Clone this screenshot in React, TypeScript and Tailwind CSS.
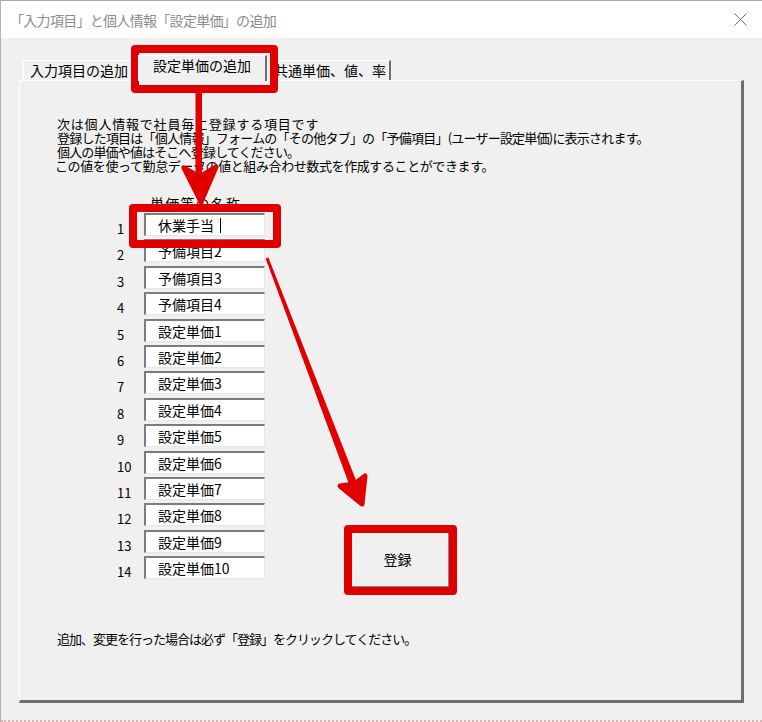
import React from "react";

const rows = [
  "休業手当",
  "予備項目2",
  "予備項目3",
  "予備項目4",
  "設定単価1",
  "設定単価2",
  "設定単価3",
  "設定単価4",
  "設定単価5",
  "設定単価6",
  "設定単価7",
  "設定単価8",
  "設定単価9",
  "設定単価10",
];

export default function App() {
  return (
    <div className="relative flex h-[722px] w-[762px] flex-col overflow-hidden border-l border-[#b4b4b4] bg-[#f0f0f0] font-['Noto_Sans_CJK_JP','Noto_Sans_JP',sans-serif] text-black">
      {/* title bar */}
      <div className="flex h-[38px] shrink-0 items-center justify-between border-t border-[#a8a8a8] bg-white pl-[9px] pr-[15px]">
        <span className="text-[14px] leading-none tracking-[-0.7px] text-[#8c8c8c]">
          「入力項目」と個人情報「設定単価」の追加
        </span>
        <svg width="13" height="13" viewBox="0 0 13 13">
          <path d="M0.5 0.5 L12.5 12.5 M12.5 0.5 L0.5 12.5" stroke="#6a6a6a" strokeWidth="1" fill="none" />
        </svg>
      </div>

      {/* body */}
      <div className="flex flex-col pl-[18px] pt-[18px]">
        {/* tabs */}
        <div className="flex h-[25px] items-end pl-[4px]">
          <div className="flex h-[21px] w-[117px] items-center overflow-hidden whitespace-nowrap border-l border-t border-white pb-[3px] pl-[6px] text-[14px] leading-none">
            入力項目の追加
          </div>
          <div className="relative z-10 -ml-[2px] flex h-[26px] w-[129px] items-center justify-center border-l border-t border-white border-r-2 border-r-[#6e6e6e] bg-[#f0f0f0] pb-[8px] text-[14px] leading-none">
            設定単価の追加
          </div>
          <div className="flex h-[21px] w-[124px] items-center whitespace-nowrap border-t border-white border-r-2 border-r-[#6e6e6e] pb-[3px] pl-[7px] text-[14px] leading-none">
            共通単価、値、率
          </div>
        </div>

        {/* panel */}
        <div className="-mt-[1px] h-[623px] w-[725px] border-l border-t border-white border-b-[3px] border-r-[3px] border-b-[#6e6e6e] border-r-[#6e6e6e]">
          <div className="ml-[37px] mt-[36px] flex flex-col text-[13px] leading-[14px]">
            <span className="tracking-[0.8px]">次は個人情報で社員毎に登録する項目です</span>
            <span className="whitespace-nowrap tracking-[-0.78px]">
              登録した項目は「個人情報」フォームの「その他タブ」の「予備項目」(ユーザー設定単価)に表示されます。
            </span>
            <span className="tracking-[-0.85px]">個人の単価や値はそこへ登録してください。</span>
            <span className="-ml-[2px] whitespace-nowrap tracking-[-0.4px]">
              この値を使って勤怠データの値と組み合わせ数式を作成することができます。
            </span>
          </div>

          <div className="ml-[130px] mt-[23px] text-[14px] leading-[14px] tracking-[1.2px]">単価等の名称</div>

          <div className="ml-[97px] mt-[3px] flex items-start">
            <div className="flex flex-col gap-[3.4px]">
              {rows.map((r, i) => (
                <div key={r} className="flex items-start">
                  <span className="mt-[9px] w-[27px] text-[13px] leading-[14px]">{i + 1}</span>
                  <div className="flex h-[23px] w-[121px] items-center border-l-2 border-t-2 border-[#7c7c7c] border-b border-r border-b-[#e6e6e6] border-r-[#e6e6e6] bg-white pl-[12px] text-[14px] leading-none">
                    <span>{r}</span>
                    {i === 0 && <span className="ml-[6px] h-[15px] w-[1px] bg-black" />}
                  </div>
                </div>
              ))}
            </div>
            <button className="ml-[85px] mt-[318px] flex h-[56px] w-[99px] items-center justify-center border-b border-l border-r border-t border-b-[#8a8a8a] border-l-white border-r-[#8a8a8a] border-t-white bg-[#f0f0f0] pr-[4px] text-[14px] leading-none">
              登録
            </button>
          </div>

          <div className="ml-[37px] mt-[45px] whitespace-nowrap text-[13px] leading-[14px] tracking-[-1px]">
            追加、変更を行った場合は必ず「登録」をクリックしてください。
          </div>
        </div>
      </div>

      <div className="mt-auto h-[3px] border-b-2 border-dotted border-[#e4b0b0]" />

      {/* annotation overlay: red boxes */}
      <div className="pointer-events-none absolute left-[130px] top-[45px] h-[48px] w-[147px] rounded-[4px] border-[8px] border-[#e10000]" />
      <div className="pointer-events-none absolute left-[128px] top-[204px] h-[44px] w-[152px] rounded-[4px] border-[8px] border-[#e10000]" />
      <div className="pointer-events-none absolute left-[343px] top-[525px] h-[70px] w-[113px] rounded-[4px] border-[8px] border-[#e10000]" />

      {/* annotation overlay: arrows */}
      <svg className="pointer-events-none absolute left-0 top-0" width="762" height="722" viewBox="0 0 762 722">
        <rect x="194.5" y="92" width="6.5" height="86" fill="#e10000" />
        <polygon
          points="200,202 183,168 198.5,177 215,167"
          fill="#e10000"
          stroke="#e10000"
          strokeWidth="5"
          strokeLinejoin="round"
        />
        <polygon points="267.4,257.5 356.7,484.6 349.3,487.4 264.6,258.5" fill="#e10000" />
        <polygon
          points="361,504 339,486 353.5,484 364,476"
          fill="#e10000"
          stroke="#e10000"
          strokeWidth="5"
          strokeLinejoin="round"
        />
      </svg>
    </div>
  );
}
